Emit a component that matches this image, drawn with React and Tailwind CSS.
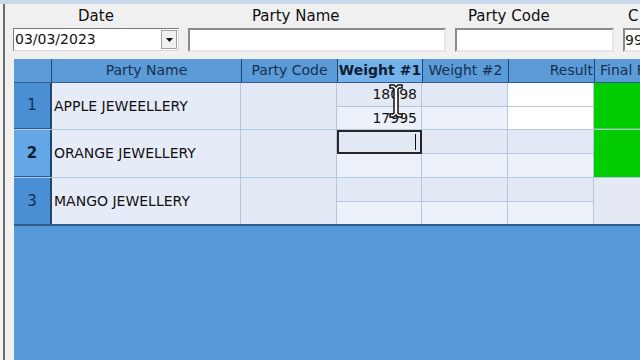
import React from 'react'

const font = { fontFamily: '"DejaVu Sans", Verdana, sans-serif' }

function Label({ children, className = '' }) {
  return <div className={`shrink-0 text-[15px] leading-[18px] text-[#111] text-center whitespace-nowrap ${className}`}>{children}</div>
}

function SubCell({ top, bottom, tone = 'a', className = '' }) {
  const bgTop = tone === 'white' ? 'bg-white' : 'bg-[#e3e9f4]'
  const bgBot = tone === 'white' ? 'bg-white' : 'bg-[#ecf1fa]'
  return (
    <div className={`shrink-0 flex flex-col border-r border-[#b3c7e2] ${className}`}>
      <div className={`h-[24px] border-b border-[#b3c7e2] ${bgTop} flex items-center justify-end pr-1`}>{top}</div>
      <div className={`flex-1 ${bgBot} flex items-center justify-end pr-1`}>{bottom}</div>
    </div>
  )
}

const rows = [
  { n: '1', name: 'APPLE JEWEELLERY', w1: ['18098', '17995'], result: 'white', green: true, h: 'h-[47px]' },
  { n: '2', name: 'ORANGE JEWELLERY', w1: ['', ''], focus: true, green: true, selected: true, h: 'h-[48px]' },
  { n: '3', name: 'MANGO JEWELLERY', w1: ['', ''], h: 'h-[48px]' },
]

export default function App() {
  return (
    <div className="w-[640px] h-[360px] overflow-hidden bg-[#f0f0f0] relative" style={font}>
      <div className="h-[4px] bg-[#c9d9ec]" />
      <div className="flex h-[356px]">
        <div className="w-[3px] shrink-0 bg-[#f4f4f4]" />
        <div className="w-[2px] shrink-0 bg-[#6d6d6d]" />
        <div className="flex-1 min-w-0 flex flex-col pl-[9px]">
          {/* labels */}
          <div className="flex h-[22px] items-center pt-[2px] -ml-px">
            <Label className="w-[166px]">Date</Label>
            <Label className="w-[86px] ml-[73px]">Party Name</Label>
            <Label className="w-[80px] ml-[130px]">Party Code</Label>
            <Label className="ml-[80px]">C</Label>
          </div>
          {/* inputs */}
          <div className="flex h-[24px] mt-[2px] items-start -ml-px">
            <div className="shrink-0 w-[166px] h-[23px] bg-white border border-[#7a7a7a] border-r-[#d8d8d8] border-b-[#d8d8d8] flex items-center">
              <span className="flex-1 text-[14px] text-[#111] pl-[1px]">03/03/2023</span>
              <div className="w-[16px] h-[19px] mr-[1px] bg-[#f0f0f0] border border-[#a0a0a0] flex items-center justify-center">
                <svg width="7" height="4" viewBox="0 0 7 4"><path d="M0 0h7L3.5 4z" fill="#111" /></svg>
              </div>
            </div>
            <div className="shrink-0 w-[258px] h-[24px] ml-[9px] bg-white border-2 border-[#8a8a8a] border-r-[#e6e6e6] border-b-[#e6e6e6]" />
            <div className="shrink-0 w-[159px] h-[24px] ml-[9px] bg-white border-2 border-[#8a8a8a] border-r-[#e6e6e6] border-b-[#e6e6e6]" />
            <div className="flex-1 h-[24px] ml-[9px] bg-white border-2 border-[#8a8a8a] border-r-0 border-b-[#e6e6e6] text-[14px] leading-[20px] text-[#222] overflow-hidden whitespace-nowrap">99</div>
          </div>
          {/* grid */}
          <div className="mt-[7px] flex-1 bg-[#5599d8] flex flex-col">
            <div className="flex h-[24px] bg-[#5b9bd8] border-b border-[#2f5e8f] text-[14px] text-[#17304f]">
              <div className="shrink-0 w-[38px] border-r border-[#1f4670]" />
              <div className="shrink-0 w-[190px] border-r border-[#1f4670] flex items-center justify-center">Party Name</div>
              <div className="shrink-0 w-[96px] border-r border-[#1f4670] flex items-center justify-center">Party Code</div>
              <div className="shrink-0 w-[85px] border-r border-[#1f4670] bg-[#75b1ea] flex items-center justify-center font-bold text-[#0e1e33]">Weight #1</div>
              <div className="shrink-0 w-[86px] border-r border-[#1f4670] flex items-center justify-center">Weight #2</div>
              <div className="shrink-0 w-[86px] border-r border-[#1f4670] flex items-center justify-end pr-[1px]">Result</div>
              <div className="flex-1 min-w-0 overflow-hidden flex items-center pl-[5px] whitespace-nowrap">Final Result</div>
            </div>
            {rows.map((r, i) => (
              <div key={r.n} className={`flex ${r.h} ${i === 2 ? 'border-b-2 border-[#2f5e8f]' : 'border-b border-[#b3c7e2]'} text-[14px] text-[#111]`}>
                <div className={`shrink-0 w-[38px] border-r-2 border-[#1f4670] ${i < 2 ? 'border-b border-b-[#2a5a8c]' : ''} flex items-center justify-center text-[15px] ${r.selected ? 'bg-[#64a6e6] font-bold text-[#0e1e33]' : 'bg-[#4a8fd3] text-[#14304f]'}`}>{r.n}</div>
                <div className="shrink-0 w-[189px] border-r border-[#b3c7e2] bg-[#e6ecf7] flex items-center pl-[2px]">{r.name}</div>
                <div className="shrink-0 w-[96px] border-r border-[#b3c7e2] bg-[#e3e9f4]" />
                <div className="shrink-0 w-[85px] relative">
                  <SubCell className="h-full" top={r.w1[0]} bottom={r.w1[1]} />
                  {r.focus && (
                    <div className="absolute left-0 top-0 w-[85px] h-[24px] border-2 border-[#2b2622] flex items-center justify-end pr-[4px]">
                      <div className="w-px h-[16px] bg-[#111]" />
                    </div>
                  )}
                </div>
                <SubCell className="w-[86px]" />
                <SubCell className="w-[86px]" tone={r.result || 'a'} />
                <div className={`flex-1 ${r.green ? 'bg-[#00cc00]' : 'bg-[#e4e9f3]'} ${i === 0 ? 'border-b border-[#3fd53f]' : ''}`} />
              </div>
            ))}
          </div>
        </div>
      </div>
      {/* mouse I-beam cursor */}
      <svg className="absolute left-[389px] top-[84px]" width="14" height="34" viewBox="0 0 14 34">
        <path d="M1 1h4l2 2 2-2h4v3h-3l-1 1v24l1 1h3v3H9l-2-2-2 2H1v-3h3l1-1V5L4 4H1z" fill="#fff" stroke="#111" strokeWidth="1.5" />
      </svg>
    </div>
  )
}
